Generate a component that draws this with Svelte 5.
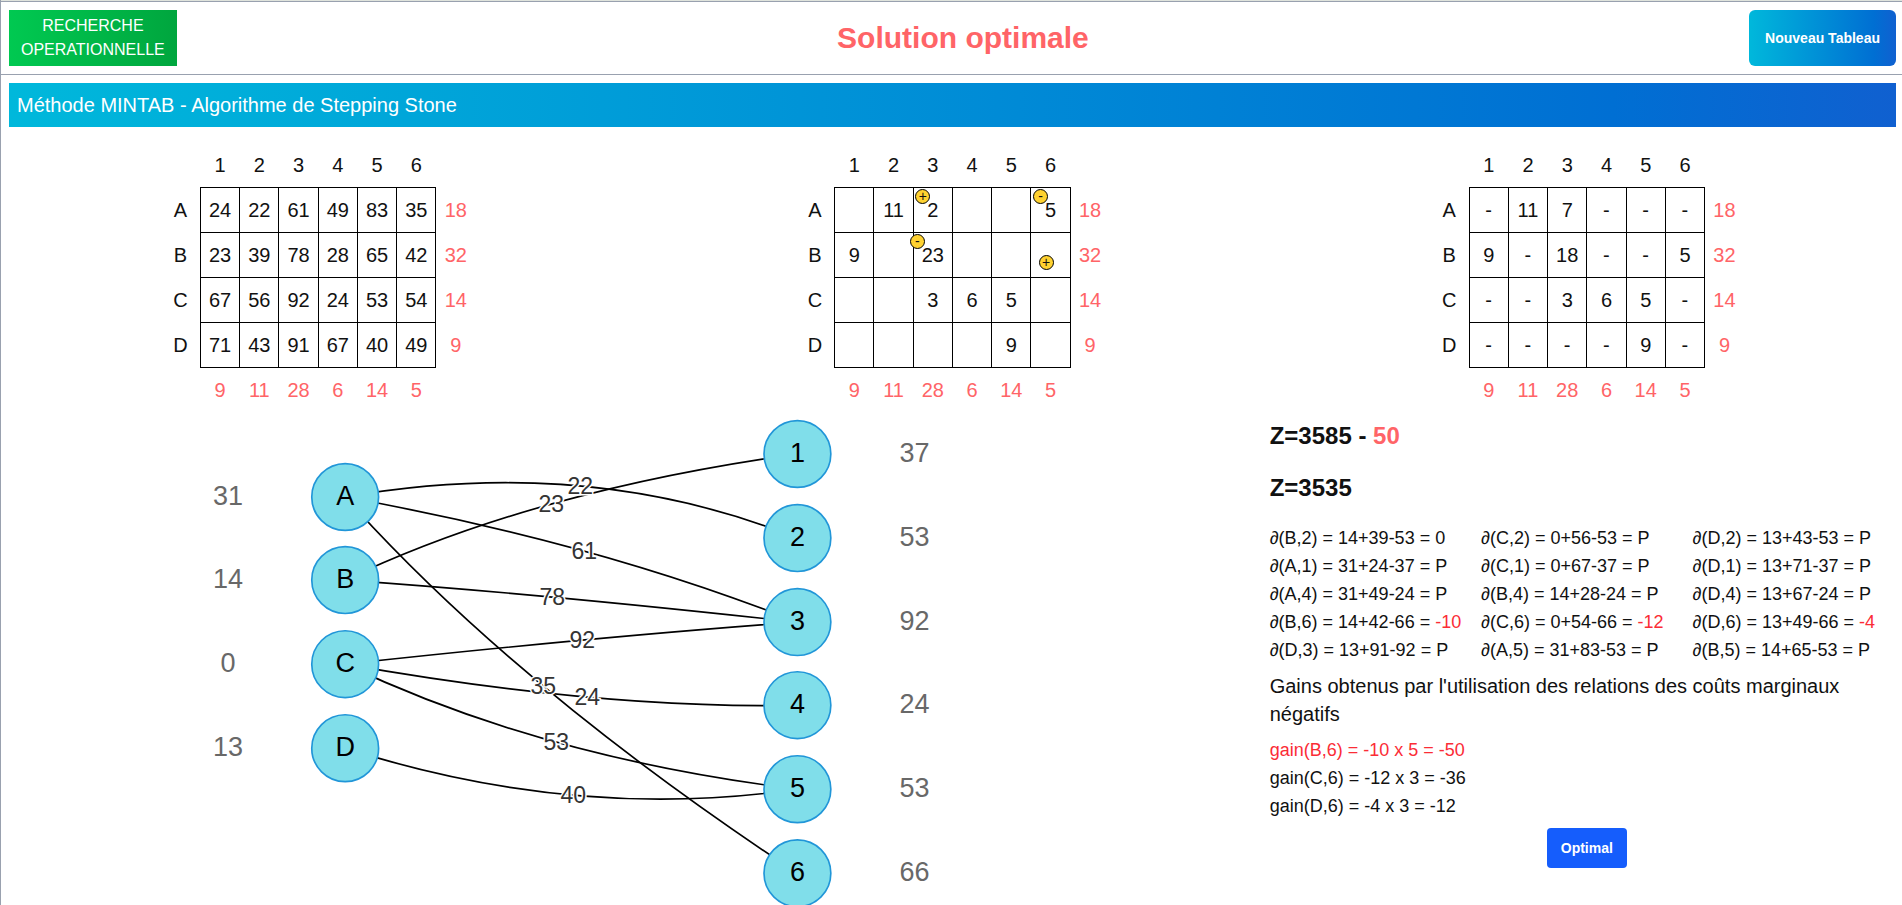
<script>
  const columns = ['1', '2', '3', '4', '5', '6'];
  const rows = ['A', 'B', 'C', 'D'];
  const supply = [18, 32, 14, 9];
  const demand = [9, 11, 28, 6, 14, 5];

  const tables = [
    {
      name: 'Coûts unitaires',
      cells: [
        [24, 22, 61, 49, 83, 35],
        [23, 39, 78, 28, 65, 42],
        [67, 56, 92, 24, 53, 54],
        [71, 43, 91, 67, 40, 49]
      ],
      signs: {}
    },
    {
      name: 'Solution précédente',
      cells: [
        ['', 11, 2, '', '', 5],
        [9, '', 23, '', '', ''],
        ['', '', 3, 6, 5, ''],
        ['', '', '', '', 9, '']
      ],
      signs: { A3: '+', A6: '-', B3: '-', B6: '+' }
    },
    {
      name: 'Solution améliorée',
      cells: [
        ['-', 11, 7, '-', '-', '-'],
        [9, '-', 18, '-', '-', 5],
        ['-', '-', 3, 6, 5, '-'],
        ['-', '-', '-', '-', 9, '-']
      ],
      signs: {}
    }
  ];

  const nodes = {
    A: { x: 344, y: 85, potential: 31 },
    B: { x: 344, y: 168, potential: 14 },
    C: { x: 344, y: 252, potential: 0 },
    D: { x: 344, y: 336, potential: 13 },
    1: { x: 796, y: 42, potential: 37 },
    2: { x: 796, y: 126, potential: 53 },
    3: { x: 796, y: 210, potential: 92 },
    4: { x: 796, y: 293, potential: 24 },
    5: { x: 796, y: 377, potential: 53 },
    6: { x: 796, y: 461, potential: 66 }
  };

  // x, y: the middle of each edge, where its cost is written
  const edges = [
    { from: 'A', to: '2', cost: 22, x: 579, y: 74 },
    { from: 'B', to: '1', cost: 23, x: 550, y: 92 },
    { from: 'A', to: '3', cost: 61, x: 583, y: 139 },
    { from: 'B', to: '3', cost: 78, x: 551, y: 185 },
    { from: 'C', to: '3', cost: 92, x: 581, y: 228 },
    { from: 'A', to: '6', cost: 35, x: 542, y: 274 },
    { from: 'C', to: '4', cost: 24, x: 586, y: 285 },
    { from: 'C', to: '5', cost: 53, x: 555, y: 330 },
    { from: 'D', to: '5', cost: 40, x: 572, y: 383 }
  ];

  // Quadratic curve that passes through the edge's middle point
  function curve(edge) {
    const a = nodes[edge.from];
    const b = nodes[edge.to];
    const cx = 2 * edge.x - (a.x + b.x) / 2;
    const cy = 2 * edge.y - (a.y + b.y) / 2;
    return `M${a.x} ${a.y} Q${cx} ${cy} ${b.x} ${b.y}`;
  }

  const marginals = [
    ['B,2', '14+39-53', '0'], ['C,2', '0+56-53', 'P'], ['D,2', '13+43-53', 'P'],
    ['A,1', '31+24-37', 'P'], ['C,1', '0+67-37', 'P'], ['D,1', '13+71-37', 'P'],
    ['A,4', '31+49-24', 'P'], ['B,4', '14+28-24', 'P'], ['D,4', '13+67-24', 'P'],
    ['B,6', '14+42-66', '-10'], ['C,6', '0+54-66', '-12'], ['D,6', '13+49-66', '-4'],
    ['D,3', '13+91-92', 'P'], ['A,5', '31+83-53', 'P'], ['B,5', '14+65-53', 'P']
  ];

  const gains = [
    { text: 'gain(B,6) = -10 x 5 = -50', best: true },
    { text: 'gain(C,6) = -12 x 3 = -36', best: false },
    { text: 'gain(D,6) = -4 x 3 = -12', best: false }
  ];
</script>

<div class="page">
  <header>
    <div class="brand">RECHERCHE<br />OPERATIONNELLE</div>
    <h1>Solution optimale</h1>
    <button class="new-table" type="button">Nouveau Tableau</button>
  </header>

  <main>
    <h2 class="method">Méthode MINTAB - Algorithme de Stepping Stone</h2>

    <div class="columns">
      {#each tables as table}
        <table aria-label={table.name}>
          <thead>
            <tr>
              <td></td>
              {#each columns as column}<th scope="col">{column}</th>{/each}
              <td></td>
            </tr>
          </thead>
          <tbody>
            {#each rows as row, r}
              <tr>
                <th scope="row">{row}</th>
                {#each table.cells[r] as value, c}
                  {@const sign = table.signs[row + columns[c]]}
                  <td class="cell">
                    {#if sign}
                      <span class="marked" class:empty={value === ''}>{value}<span class="sign">{sign}</span></span>
                    {:else}{value}{/if}
                  </td>
                {/each}
                <td class="total">{supply[r]}</td>
              </tr>
            {/each}
          </tbody>
          <tfoot>
            <tr>
              <td></td>
              {#each demand as value}<td class="total">{value}</td>{/each}
              <td></td>
            </tr>
          </tfoot>
        </table>
      {/each}

      <svg class="graph" viewBox="0 0 1268 493" role="img" aria-label="Graphe des potentiels">
        {#each edges as edge}
          <path class="edge" d={curve(edge)} />
        {/each}
        {#each edges as edge}
          <text class="cost" x={edge.x} y={edge.y + 8}>{edge.cost}</text>
        {/each}
        {#each Object.entries(nodes) as [name, node]}
          <circle class="node" cx={node.x} cy={node.y} r="33.4" />
          <text class="name" x={node.x} y={node.y + 8}>{name}</text>
          <text class="potential" x={node.x < 500 ? node.x - 117 : node.x + 117} y={node.y + 8}>{node.potential}</text>
        {/each}
      </svg>

      <section class="results">
        <p class="objective">Z=3585 - <span class="drop">50</span></p>
        <p class="objective">Z=3535</p>

        <ul class="marginals">
          {#each marginals as [pair, sum, result]}
            <li>∂({pair}) = {sum} = <span class:negative={result.startsWith('-')}>{result}</span></li>
          {/each}
        </ul>

        <p class="caption">Gains obtenus par l'utilisation des relations des coûts marginaux négatifs</p>

        <ul class="gains">
          {#each gains as gain}
            <li class:negative={gain.best}>{gain.text}</li>
          {/each}
        </ul>

        <button class="optimal" type="button">Optimal</button>
      </section>
    </div>
  </main>
</div>

<style>
  :global(body) {
    margin: 0;
    overflow: hidden;
    background: #fff;
  }

  .page {
    box-sizing: border-box;
    width: calc(100% + 3px);
    min-height: 100vh;
    border: 1px solid #99a1af;
    border-top: 0;
    color: #111;
    font-family: "Liberation Sans", Arial, sans-serif;
    font-size: 20px;
    line-height: 28px;
  }

  .page::before {
    content: "";
    display: block;
    height: 1px;
    background: #dfe3dc;
    border-bottom: 1px solid #99a1af;
  }

  h1, h2, p, ul {
    margin: 0;
    padding: 0;
    list-style: none;
  }

  header {
    display: flex;
    justify-content: space-between;
    align-items: center;
    padding: 8px;
    border-bottom: 1px solid #99a1af;
  }

  .brand {
    padding: 4px 12px;
    background: linear-gradient(to right, #00c951, #00a63e);
    color: #fff;
    font-size: 16px;
    line-height: 24px;
    text-align: center;
  }

  h1 {
    color: #ff6467;
    font-size: 30px;
    line-height: 36px;
  }

  button {
    border: 0;
    color: #fff;
    font-family: inherit;
    font-size: 14px;
    font-weight: 700;
    line-height: 24px;
    cursor: pointer;
  }

  .new-table {
    align-self: stretch;
    padding: 8px 16px;
    border-radius: 6px;
    background: linear-gradient(to right, #00b8db, #006fd3 85%, #1060d0);
  }

  .method {
    margin: 8px;
    padding: 8px;
    background: linear-gradient(to right, #00b8db, #006fd3 85%, #1060d0);
    color: #fff;
    font-size: 20px;
    font-weight: 400;
  }

  .columns {
    display: grid;
    grid-template-columns: repeat(3, minmax(0, 1fr));
    align-items: start;
    padding-top: 8px;
  }

  table {
    width: 314px;
    margin: 0 auto;
    table-layout: fixed;
    border-collapse: collapse;
    text-align: center;
  }

  th, td {
    height: 45px;
    padding: 0;
    font-weight: 400;
  }

  thead th, thead td, tfoot td {
    height: 44px;
  }

  .cell {
    border: 1px solid #000;
    box-sizing: border-box;
  }

  .total {
    color: #ff6467;
  }

  .marked {
    position: relative;
  }

  .sign {
    position: absolute;
    top: -10px;
    left: -12px;
    box-sizing: border-box;
    width: 15px;
    height: 15px;
    border: 1px solid #000;
    border-radius: 50%;
    background: #ffd230;
    font-size: 14px;
    line-height: 13px;
  }

  .empty .sign {
    top: 0;
  }

  .graph {
    grid-column: span 2;
    width: 100%;
  }

  .edge {
    fill: none;
    stroke: #000;
    stroke-width: 1.67;
  }

  .graph text {
    text-anchor: middle;
  }

  .cost {
    fill: #343434;
    stroke: #fff;
    stroke-width: 3px;
    paint-order: stroke;
    font-size: 23px;
  }

  .node {
    fill: #80deea;
    stroke: #2196d8;
    stroke-width: 1.67;
  }

  .name {
    fill: #000;
    font-size: 27px;
  }

  .potential {
    fill: #686868;
    font-size: 27px;
  }

  .results {
    display: flex;
    flex-direction: column;
    padding-top: 8px;
  }

  .objective {
    margin-bottom: 20px;
    font-size: 24px;
    font-weight: 700;
    line-height: 32px;
  }

  .drop {
    color: #ff6467;
  }

  .negative {
    color: #fb2c36;
  }

  .marginals {
    display: grid;
    grid-template-columns: repeat(3, minmax(0, 1fr));
    font-size: 18px;
    white-space: nowrap;
  }

  .caption {
    margin: 8px 0;
  }

  .gains {
    font-size: 18px;
  }

  .optimal {
    align-self: center;
    margin-top: 8px;
    padding: 8px 14px;
    border-radius: 4px;
    background: #155dfc;
  }
</style>
